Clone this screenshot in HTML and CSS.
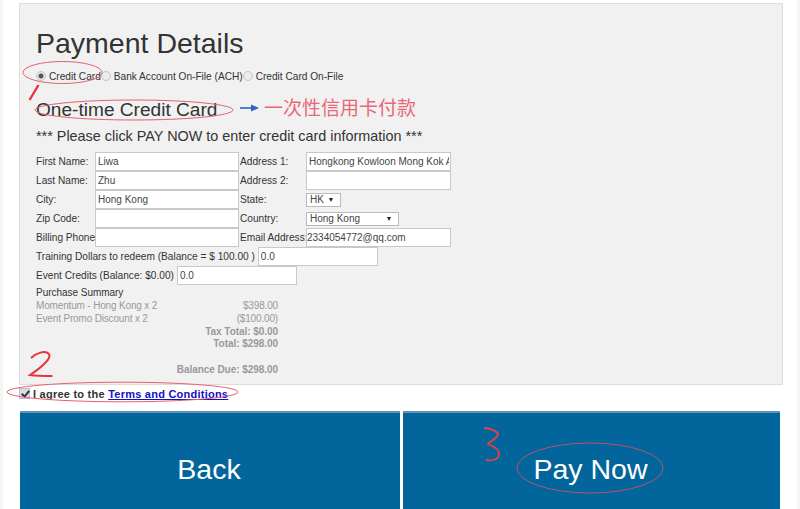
FILE: index.html
```html
<!DOCTYPE html>
<html lang="en">
<head>
<meta charset="utf-8">
<title>Payment Details</title>
<link rel="stylesheet" href="styles.css">
</head>
<body>
<div class="page">
  <form class="panel">
    <h1 class="title">Payment Details</h1>
    <div class="methods">
      <label class="method"><input type="radio" name="m" class="radio" checked>Credit Card</label>
      <label class="method"><input type="radio" name="m" class="radio">Bank Account On-File (ACH)</label>
      <label class="method"><input type="radio" name="m" class="radio">Credit Card On-File</label>
    </div>
    <h2 class="subtitle">One-time Credit Card</h2>
    <p class="notice">*** Please click PAY NOW to enter credit card information ***</p>
    <div class="fields">
      <label>First Name:</label><input class="field" value="Liwa"><span></span><label>Address 1:</label><input class="field" value="Hongkong Kowloon Mong Kok A">
      <label>Last Name:</label><input class="field" value="Zhu"><span></span><label>Address 2:</label><input class="field">
      <label>City:</label><input class="field" value="Hong Kong"><span></span><label>State:</label><div class="select select-state"><select><option>HK</option></select></div>
      <label>Zip Code:</label><input class="field"><span></span><label>Country:</label><div class="select select-country"><select><option>Hong Kong</option></select></div>
      <label>Billing Phone</label><input class="field"><span></span><label>Email Address:</label><input class="field field-email" value="2334054772@qq.com">
    </div>
    <div class="redeem"><label>Training Dollars to redeem (Balance = $ 100.00 )</label><input class="field field-training" value="0.0"></div>
    <div class="redeem"><label>Event Credits (Balance: $0.00)</label><input class="field field-training" value="0.0"></div>
    <div class="summary">
      <div class="summary-title">Purchase Summary</div>
      <div class="line"><span>Momentum - Hong Kong x 2</span><span>$398.00</span></div>
      <div class="line"><span>Event Promo Discount x 2</span><span>($100.00)</span></div>
      <div class="line line-bold"><span>Tax Total: $0.00</span></div>
      <div class="line line-bold"><span>Total: $298.00</span></div>
      <div class="line line-bold line-due"><span>Balance Due: $298.00</span></div>
    </div>
  </form>
  <label class="agree"><input type="checkbox" class="check" checked>I agree to the <a href="#" class="terms">Terms and Conditions</a></label>
  <div class="actions">
    <button type="button" class="action action-back">Back</button>
    <button type="button" class="action action-pay">Pay Now</button>
  </div>
</div>
<svg class="marks" width="800" height="509" viewBox="0 0 800 509" fill="none" aria-hidden="true">
  <ellipse cx="62.5" cy="72.5" rx="39.5" ry="11" stroke="#e2626e" stroke-width="1"/>
  <path d="M38.5 85 L29.5 100" stroke="#e8343c" stroke-width="2.4"/>
  <ellipse cx="134" cy="110" rx="99" ry="10" stroke="#e2626e" stroke-width="1"/>
  <path d="M240 108 H254" stroke="#2f5fc8" stroke-width="1.6"/>
  <path d="M251 104.5 L259 108 L251 111.5 Z" fill="#2f5fc8"/>
  <text x="264" y="115" class="note">一次性信用卡付款</text>
  <path d="M31 358 C36 353 45 350 49 354 C52 358 42 367 30 375 C37 376 45 376 52.5 376" stroke="#e8343c" stroke-width="2"/>
  <ellipse cx="122.5" cy="392" rx="115.500" ry="9.800" stroke="#e2626e" stroke-width="1"/>
  <path d="M484 428 C490 428 497 431 498 434 C497 439 490 441 488 444 C493 446 500 450 499 455 C498 460 491 461 486 460" stroke="#e8403f" stroke-width="1.800"/>
  <ellipse cx="590" cy="468" rx="73" ry="25" stroke="#b5566a" stroke-width="1"/>
</svg>
</body>
</html>
```

FILE: styles.css
```css
* { box-sizing: border-box; }
html, body { margin: 0; height: 509px; overflow: hidden; }
body {
  position: relative;
  background: #f5f5f5;
  font-family: "Liberation Sans", Arial, sans-serif;
  color: #333;
}
.page {
  margin: 0 3px;
  height: 509px;
  padding: 3px 16px 0;
  background: #fff;
}
.panel {
  height: 382px;
  width: 764px;
  padding: 21px 16px 0;
  background: #f1f1f1;
  border: 1px solid #ddd;
  font-size: 10.150px;
}
.title {
  margin: 0;
  font-size: 28.500px;
  font-weight: 400;
  line-height: 37px;
}
.methods {
  display: flex;
  margin-top: 6px;
  height: 16px;
  align-items: center;
}
.method { display: flex; align-items: center; white-space: nowrap; }
.radio {
  appearance: none;
  width: 10px;
  height: 10px;
  margin: 0 3px 0 0;
  border: 1px solid #c4c4c4;
  border-radius: 50%;
  background: #ececec;
  flex: none;
}
.radio:checked { background: radial-gradient(circle, #555 0 2px, #e8e8e8 3px); }
.subtitle {
  margin: 15px 0 0;
  font-size: 19.100px;
  font-weight: 400;
  line-height: 22px;
}
.notice {
  margin: 6px 0 0;
  font-size: 14.400px;
  line-height: 18px;
}
.fields {
  display: grid;
  grid-template-columns: 59px 144px 1px 66px 145px;
  grid-auto-rows: 19px;
  width: 415px;
  margin-top: 7px;
  align-items: center;
}
.fields label { white-space: nowrap; }
.field {
  display: block;
  height: 19px;
  width: 100%;
  padding: 0 1px 0 2px;
  border: 1px solid #c8c8c8;
  border-radius: 0;
  background: #fff;
  color: #444;
  font: 10px "Liberation Sans", Arial, sans-serif;
  outline: 0;
}
.field-email { padding-left: 0; }
.select { position: relative; height: 14px; }
.select select {
  appearance: none;
  display: block;
  width: 100%;
  height: 14px;
  padding: 0 0 0 3px;
  border: 1px solid #bbb;
  border-radius: 0;
  background: #fff;
  color: #444;
  font: 10px "Liberation Sans", Arial, sans-serif;
}
.select::after {
  content: "";
  position: absolute;
  right: 8px;
  top: 5px;
  border-left: 2.500px solid transparent;
  border-right: 2.500px solid transparent;
  border-top: 4px solid #222;
}
.select-state { width: 35px; }
.select-country { width: 93px; }
.redeem { display: flex; align-items: center; height: 19px; white-space: nowrap; }
.redeem label { margin-right: 3px; }
.field-training { width: 120px; }
.summary { width: 242px; margin-top: 1px; line-height: 12.800px; font-size: 10px; }
.summary-title { padding-top: 1px; height: 14px; letter-spacing: -.03px; }
.line { display: flex; justify-content: space-between; color: #999; letter-spacing: -.16px; }
.line-bold { justify-content: flex-end; font-weight: 700; letter-spacing: -.05px; }
.line-due { margin-top: 13px; }
.agree {
  display: flex;
  align-items: center;
  height: 19px;
  padding-bottom: 2px;
  font-size: 11px;
  font-weight: 700;
  letter-spacing: .24px;
  white-space: pre;
  color: #333;
}
.check {
  appearance: none;
  position: relative;
  width: 11px;
  height: 11px;
  margin: 0 3px 0 0;
  border: 1px solid #b9b9e6;
  background: #ddd;
  flex: none;
}
.check::after {
  content: "";
  position: absolute;
  left: 2.500px;
  top: 0;
  width: 3px;
  height: 6px;
  border-right: 2px solid #333;
  border-bottom: 2px solid #333;
  transform: rotate(40deg);
}
.terms { color: #1010c8; }
.actions {
  display: grid;
  grid-template-columns: 380px 377px;
  gap: 3px;
  margin: 7px 0 0 1px;
}
.action {
  height: 120px;
  border: 0;
  border-top: 2px solid #5e93b5;
  background: #02659b;
  color: #fff;
  font: 400 28.500px "Liberation Sans", Arial, sans-serif;
}
.action-back { padding: 0 2px 6px 0; }
.action-pay { padding: 0 2px 6px 0; }
.marks { position: absolute; left: 0; top: 0; pointer-events: none; }
.note {
  font-family: "Noto Sans CJK SC", sans-serif;
  font-size: 19px;
  fill: #e8687a;
  stroke: none;
}
```
